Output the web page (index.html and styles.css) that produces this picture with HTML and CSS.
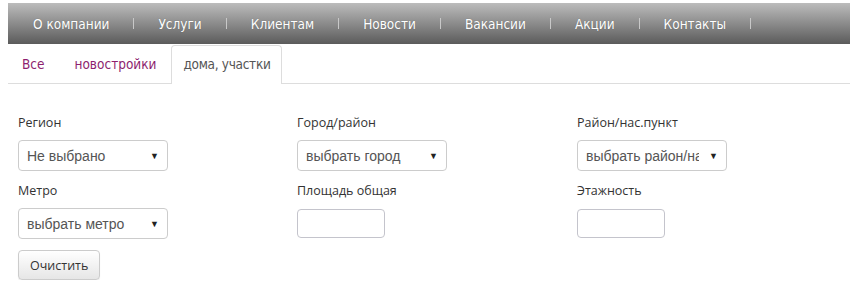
FILE: index.html
```html
<!DOCTYPE html>
<html lang="ru">
<head>
  <meta charset="UTF-8" />
  <title>Поиск — дома, участки</title>
  <link rel="stylesheet" href="styles.css">
</head>
<body>

  <nav class="top-menu">
    <a href="#">О компании</a>
    <a href="#">Услуги</a>
    <a href="#">Клиентам</a>
    <a href="#">Новости</a>
    <a href="#">Вакансии</a>
    <a href="#">Акции</a>
    <a href="#">Контакты</a>
  </nav>

  <ul class="tabs">
    <li><a href="#">Все</a></li>
    <li><a href="#">новостройки</a></li>
    <li class="active"><a href="#">дома, участки</a></li>
  </ul>

  <form class="filter">
    <div class="field">
      <label>Регион</label>
      <div class="select"><span>Не выбрано</span><i>&#9660;</i></div>
    </div>
    <div class="field">
      <label>Город/район</label>
      <div class="select"><span>выбрать город</span><i>&#9660;</i></div>
    </div>
    <div class="field">
      <label>Район/нас.пункт</label>
      <div class="select"><span>выбрать район/нас.пункт</span><i>&#9660;</i></div>
    </div>

    <div class="field">
      <label>Метро</label>
      <div class="select"><span>выбрать метро</span><i>&#9660;</i></div>
    </div>
    <div class="field">
      <label>Площадь общая</label>
      <input type="text" />
    </div>
    <div class="field">
      <label>Этажность</label>
      <input type="text" />
    </div>

    <div class="actions">
      <button type="reset">Очистить</button>
    </div>
  </form>

</body>
</html>
```

FILE: styles.css
```css
body {
  margin: 3px 10px 0 8px;
  font-family: 'Open Sans', sans-serif;
  color: #333;
  background: #fff;
}

/* Верхнее меню */
.top-menu {
  display: flex;
  align-items: center;
  height: 41px;
  padding-left: 1px;
  background: linear-gradient(to bottom, #bcbcbc, #5b5b5b);
}

.top-menu a {
  position: relative;
  padding: 0 25px 0 24px;
  font-family: 'DejaVu Sans Condensed', 'DejaVu Sans', sans-serif;
  font-size: 13.5px;
  color: #fff;
  text-decoration: none;
  text-shadow: 0 0 1px rgba(0, 0, 0, 0.3);
}

.top-menu a::after {
  content: '';
  position: absolute;
  right: 0;
  top: 2px;
  height: 11px;
  border-right: 1px solid #c8c8c8;
}

/* Вкладки */
.tabs {
  display: flex;
  list-style: none;
  margin: 0;
  padding: 1px 0 0;
  border-bottom: 1px solid #ddd;
}

.tabs li a {
  display: block;
  padding: 9px 14px 10px;
  font-family: 'DejaVu Sans Condensed', 'DejaVu Sans', sans-serif;
  font-size: 13.5px;
  line-height: 18px;
  color: #8e1f6f;
  text-decoration: none;
  border: 1px solid transparent;
  border-bottom: none;
  border-radius: 4px 4px 0 0;
  margin-bottom: -1px;
}

.tabs li:first-child a {
  padding-left: 13px;
}

.tabs li.active a {
  color: #555;
  background: #fff;
  border-color: #ddd;
  padding: 9px 10px 11px 11px;
  letter-spacing: -0.3px;
}

/* Фильтр */
.filter {
  display: grid;
  grid-template-columns: 279px 280px 280px;
  row-gap: 11px;
  padding: 30px 10px 0;
}

.field label {
  display: block;
  font-size: 12.5px;
  line-height: 18px;
  margin-bottom: 8px;
  color: #333;
}

.select {
  display: flex;
  align-items: center;
  box-sizing: border-box;
  width: 150px;
  height: 31px;
  padding: 0 8px 0 8px;
  border: 1px solid #ccc;
  border-radius: 4px;
  font-family: 'Liberation Sans', Arial, sans-serif;
  font-size: 14px;
  color: #555;
}

.select span {
  flex: 1;
  min-width: 0;
  white-space: nowrap;
  overflow: hidden;
}

.select i {
  font-style: normal;
  font-size: 9px;
  color: #222;
  margin-left: 10px;
}

.field input {
  box-sizing: border-box;
  width: 88px;
  height: 29px;
  margin-top: 1px;
  border: 1px solid #c4c4cc;
  border-radius: 4px;
  padding: 0 6px;
}

.actions {
  grid-column: 1 / -1;
  margin-top: 0;
}

.actions button {
  height: 30px;
  padding: 0 11px;
  font-family: 'Open Sans', sans-serif;
  font-size: 12.5px;
  color: #333;
  background: linear-gradient(to bottom, #fff, #e6e6e6);
  border: 1px solid #ccc;
  border-radius: 4px;
  box-shadow: 0 1px 1px rgba(0, 0, 0, 0.08);
}
```
